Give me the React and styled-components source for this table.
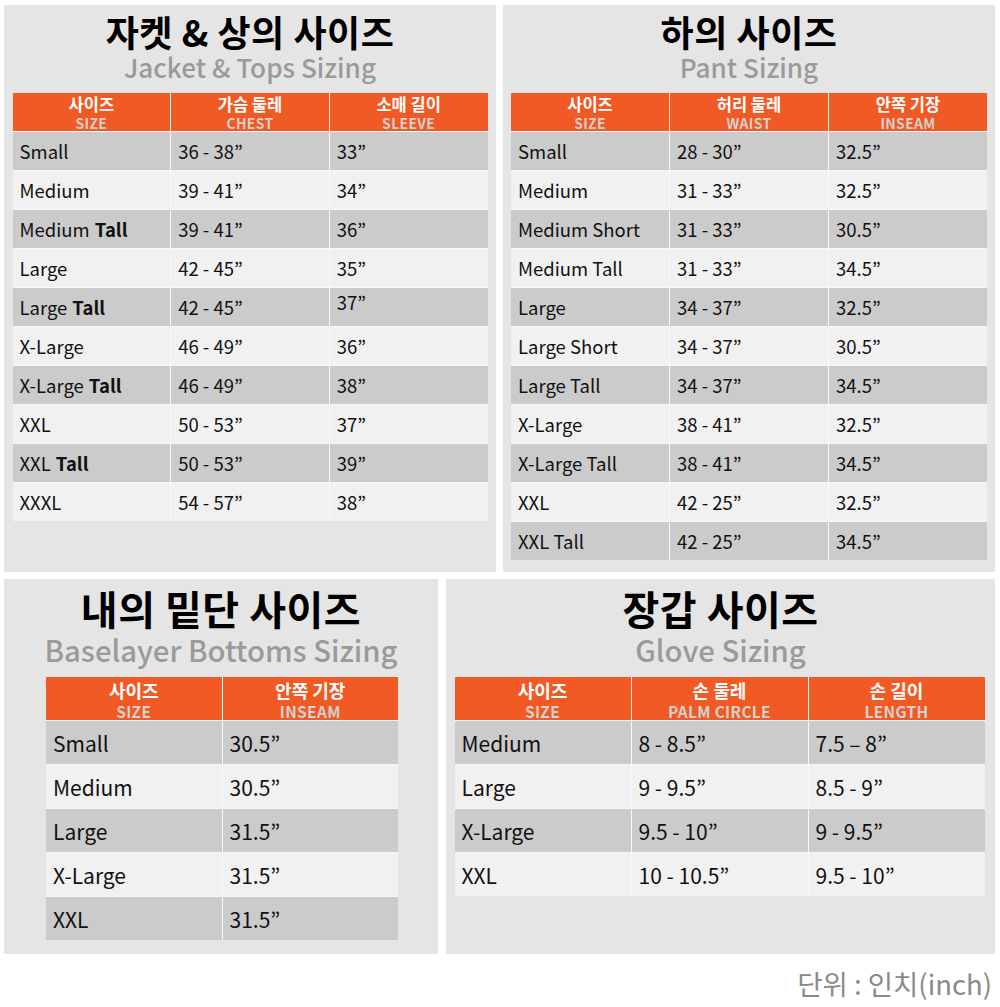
import React from "react";
import styled, { createGlobalStyle } from "styled-components";

const GlobalStyle = createGlobalStyle`
  body {
    margin: 0;
    background: #ffffff;
    font-family: "Noto Sans CJK KR", "Noto Sans", sans-serif;
  }
`;

//전체 레이아웃 ========================================================

const Page = styled.div`
  width: 1000px;
  height: 1007px;
  display: flex;
  flex-direction: column;
  padding: 5px 5px 0 4px;
  box-sizing: border-box;
`;

const Row = styled.div`
  display: flex;
  gap: ${(props) => props.$gap}px;
  margin-top: ${(props) => props.$mt || 0}px;
`;

const Panel = styled.section`
  width: ${(props) => props.$w}px;
  height: ${(props) => props.$h}px;
  background: #e5e5e5;
  display: flex;
  flex-direction: column;
  align-items: center;
  padding-top: ${(props) => (props.$big ? 7 : 6)}px;
  box-sizing: border-box;
`;

const Title = styled.h2`
  margin: 0;
  font-size: ${(props) => (props.$big ? 40 : 36)}px;
  line-height: ${(props) => (props.$big ? 44 : 40)}px;
  font-weight: 700;
  color: #000;
  letter-spacing: 0.5px;
`;

const Subtitle = styled.div`
  font-size: ${(props) => (props.$big ? 29.3 : 26.1)}px;
  line-height: ${(props) => (props.$big ? 34 : 32)}px;
  font-weight: 500;
  color: #9a9a9a;
  margin-top: ${(props) => (props.$big ? 2 : 0)}px;
  margin-bottom: ${(props) => (props.$big ? 11 : 10)}px;
`;

//표 ===============================================

const Table = styled.div`
  width: ${(props) => props.$w}px;
  display: grid;
  grid-template-columns: repeat(${(props) => props.$cols}, 1fr);
  grid-template-rows: ${(props) => props.$head}px;
  grid-auto-rows: ${(props) => props.$row}px;
  gap: 1px;
  background: #f8f8f8;
  margin-left: ${(props) => props.$shift || 0}px;
`;

const HeadCell = styled.div`
  background: #f15a24;
  display: flex;
  flex-direction: column;
  align-items: center;
  justify-content: flex-start;
  padding-top: ${(props) => (props.$big ? 2 : 1)}px;
  font-weight: 700;
  box-sizing: border-box;

  .ko {
    color: #fff;
    font-size: ${(props) => (props.$big ? 18 : 16.5)}px;
    line-height: ${(props) => (props.$big ? 22 : 20)}px;
  }
  .en {
    color: #d4cfcc;
    margin-top: 1px;
    font-size: ${(props) => (props.$big ? 15.5 : 14)}px;
    line-height: ${(props) => (props.$big ? 18 : 16)}px;
    letter-spacing: 0.3px;
  }
`;

const Cell = styled.div`
  background: ${(props) => (props.$dark ? "#cbcbcb" : "#f1f1f1")};
  display: flex;
  align-items: ${(props) => (props.$top ? "flex-start" : "center")};
  padding-left: 7px;
  padding-top: ${(props) => (props.$top ? 1 : 0)}px;
  font-size: ${(props) => (props.$big ? 21 : 18.5)}px;
  color: #111;
  box-sizing: border-box;

  b {
    font-weight: 700;
    margin-left: 5px;
  }
`;

const Footer = styled.div`
  text-align: right;
  padding-right: 3px;
  margin-top: 9px;
  font-size: 27.5px;
  line-height: 40px;
  color: #8a8a8a;
`;

//데이터 ===============================================

const jacket = [
  ["Small", "", "36 - 38”", "33”"],
  ["Medium", "", "39 - 41”", "34”"],
  ["Medium", "Tall", "39 - 41”", "36”"],
  ["Large", "", "42 - 45”", "35”"],
  ["Large", "Tall", "42 - 45”", "37”", true],
  ["X-Large", "", "46 - 49”", "36”"],
  ["X-Large", "Tall", "46 - 49”", "38”"],
  ["XXL", "", "50 - 53”", "37”"],
  ["XXL", "Tall", "50 - 53”", "39”"],
  ["XXXL", "", "54 - 57”", "38”"],
];

const pants = [
  ["Small", "28 - 30”", "32.5”"],
  ["Medium", "31 - 33”", "32.5”"],
  ["Medium Short", "31 - 33”", "30.5”"],
  ["Medium Tall", "31 - 33”", "34.5”"],
  ["Large", "34 - 37”", "32.5”"],
  ["Large Short", "34 - 37”", "30.5”"],
  ["Large Tall", "34 - 37”", "34.5”"],
  ["X-Large", "38 - 41”", "32.5”"],
  ["X-Large Tall", "38 - 41”", "34.5”"],
  ["XXL", "42 - 25”", "32.5”"],
  ["XXL Tall", "42 - 25”", "34.5”"],
];

const base = [
  ["Small", "30.5”"],
  ["Medium", "30.5”"],
  ["Large", "31.5”"],
  ["X-Large", "31.5”"],
  ["XXL", "31.5”"],
];

const glove = [
  ["Medium", "8 - 8.5”", "7.5 – 8”"],
  ["Large", "9 - 9.5”", "8.5 - 9”"],
  ["X-Large", "9.5 - 10”", "9 - 9.5”"],
  ["XXL", "10 - 10.5”", "9.5 - 10”"],
];

function Head({ heads, big }) {
  return heads.map(([ko, en]) => (
    <HeadCell key={ko + en} $big={big}>
      <span className="ko">{ko}</span>
      <span className="en">{en}</span>
    </HeadCell>
  ));
}

function Rows({ rows, big }) {
  return rows.map((r, i) =>
    r.map((v, j) => (
      <Cell key={i + "-" + j} $dark={i % 2 === 0} $big={big}>
        {v}
      </Cell>
    ))
  );
}

export default function App() {
  return (
    <>
      <GlobalStyle />
      <Page>
        <Row $gap={7}>
          {/* 자켓 */}
          <Panel $w={492} $h={567}>
            <Title>자켓 &amp; 상의 사이즈</Title>
            <Subtitle>Jacket &amp; Tops Sizing</Subtitle>
            <Table $w={475} $cols={3} $head={38} $row={38}>
              <Head
                heads={[
                  ["사이즈", "SIZE"],
                  ["가슴 둘레", "CHEST"],
                  ["소매 길이", "SLEEVE"],
                ]}
              />
              {jacket.map(([name, tall, chest, sleeve, top], i) => (
                <React.Fragment key={i}>
                  <Cell $dark={i % 2 === 0}>
                    {name}
                    {tall && <b>{tall}</b>}
                  </Cell>
                  <Cell $dark={i % 2 === 0}>{chest}</Cell>
                  <Cell $dark={i % 2 === 0} $top={top}>
                    {sleeve}
                  </Cell>
                </React.Fragment>
              ))}
            </Table>
          </Panel>

          {/* 하의 */}
          <Panel $w={492} $h={567}>
            <Title>하의 사이즈</Title>
            <Subtitle>Pant Sizing</Subtitle>
            <Table $w={476} $cols={3} $head={38} $row={38}>
              <Head
                heads={[
                  ["사이즈", "SIZE"],
                  ["허리 둘레", "WAIST"],
                  ["안쪽 기장", "INSEAM"],
                ]}
              />
              <Rows rows={pants} />
            </Table>
          </Panel>
        </Row>

        <Row $gap={8} $mt={7}>
          {/* 내의 */}
          <Panel $w={434} $h={375} $big>
            <Title $big>내의 밑단 사이즈</Title>
            <Subtitle $big>Baselayer Bottoms Sizing</Subtitle>
            <Table $w={352} $cols={2} $head={43} $row={43} $shift={2}>
              <Head
                big
                heads={[
                  ["사이즈", "SIZE"],
                  ["안쪽 기장", "INSEAM"],
                ]}
              />
              <Rows rows={base} big />
            </Table>
          </Panel>

          {/* 장갑 */}
          <Panel $w={549} $h={375} $big>
            <Title $big>장갑 사이즈</Title>
            <Subtitle $big>Glove Sizing</Subtitle>
            <Table $w={530} $cols={3} $head={43} $row={43} $shift={-2}>
              <Head
                big
                heads={[
                  ["사이즈", "SIZE"],
                  ["손 둘레", "PALM CIRCLE"],
                  ["손 길이", "LENGTH"],
                ]}
              />
              <Rows rows={glove} big />
            </Table>
          </Panel>
        </Row>

        <Footer>단위 : 인치(inch)</Footer>
      </Page>
    </>
  );
}
